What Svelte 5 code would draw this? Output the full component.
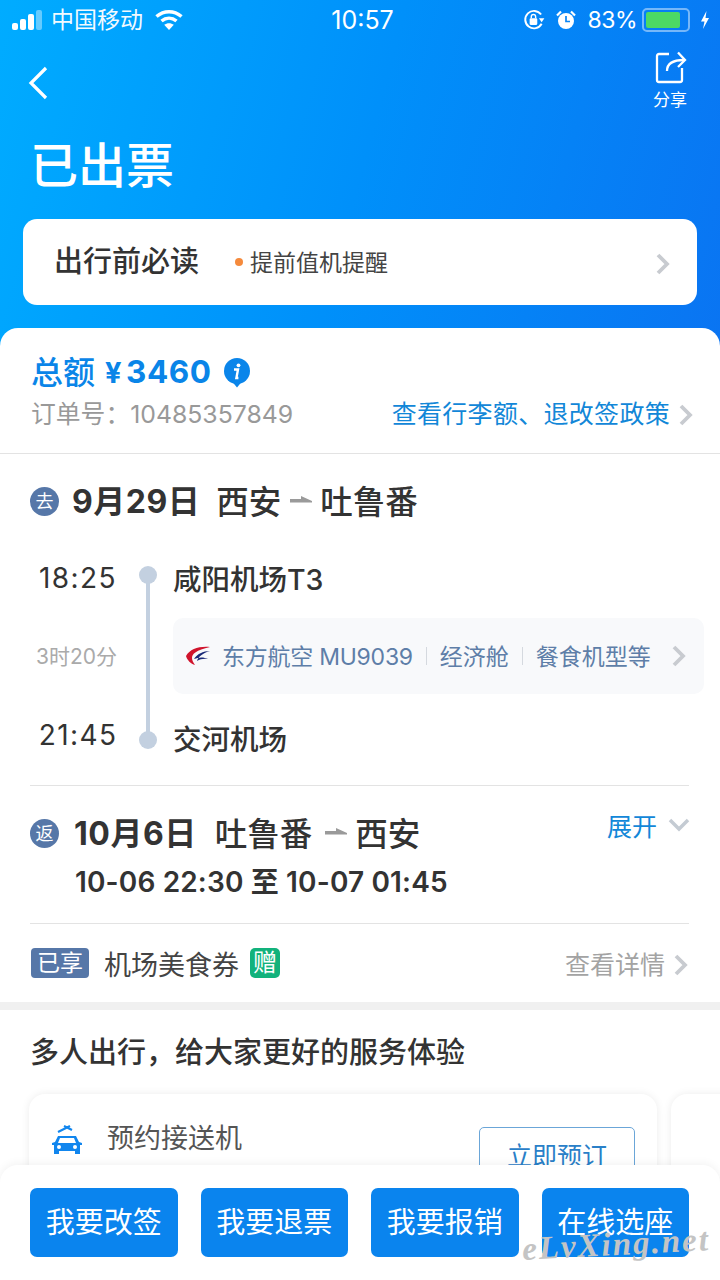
<script>
  const buttons = ['我要改签', '我要退票', '我要报销', '在线选座'];
</script>

<div class="page">
  <header class="hero">
    <div class="status">
      <div class="status-side">
        <svg class="signal" width="34" height="22" viewBox="0 0 34 22">
          <rect x="1" y="14" width="6" height="7" rx="2" fill="#fff"/>
          <rect x="9" y="10" width="6" height="11" rx="2" fill="#fff"/>
          <rect x="17" y="5" width="6" height="16" rx="2" fill="#fff"/>
          <rect x="25" y="1" width="6" height="20" rx="2" fill="#fff" opacity=".4"/>
        </svg>
        <span class="carrier">中国移动</span>
        <svg class="wifi" width="28" height="22" viewBox="0 0 28 22" fill="none" stroke="#fff" stroke-width="3.5">
          <path d="M1.500 7.500C9 1 19 1 26.500 7.500"/>
          <path d="M6.500 12C11 8.300 17 8.300 21.500 12"/>
          <path d="M14 21l-4.800-5.200C12 13.600 16 13.600 18.800 15.800z" fill="#fff" stroke="none"/>
        </svg>
      </div>
      <span class="clock">10:57</span>
      <div class="status-side right">
        <svg width="24" height="24" viewBox="0 0 22 22" fill="none" stroke="#fff" stroke-width="1.800">
          <path d="M18 14.500A8 8 0 1 1 17.500 6"/>
          <path d="M20.500 9.500h-5l2.500 3.500z" fill="#fff" stroke="none"/>
          <rect x="7" y="9.500" width="7" height="6" rx="1" fill="#fff" stroke="none"/>
          <path d="M8.500 9.500V8a2 2 0 0 1 4 0v1.500" stroke-width="1.300"/>
        </svg>
        <svg class="alarm" width="20" height="22" viewBox="0 0 20 22">
          <circle cx="10" cy="12" r="8" fill="#fff"/>
          <path d="M10 7v5.500h4" stroke="#0a85f4" stroke-width="1.700" fill="none"/>
          <path d="M1 6.500L5 2.500M19 6.500L15 2.500" stroke="#fff" stroke-width="2.200"/>
        </svg>
        <span class="pct">83%</span>
        <div class="battery"><i></i></div>
        <svg width="10" height="20" viewBox="0 0 10 20"><path d="M6.500 1L1 11.500h3.500L3 19l6-11H5.500z" fill="#fff"/></svg>
      </div>
    </div>

    <div class="nav">
      <svg class="back" width="24" height="36" viewBox="0 0 24 36" fill="none" stroke="#fff" stroke-width="3.200">
        <path d="M19 3L4 18l15 15"/>
      </svg>
      <div class="share">
        <svg width="34" height="34" viewBox="0 0 34 34" fill="none" stroke="#fff" stroke-width="2.300">
          <path d="M15 4H5a2 2 0 0 0-2 2v24a2 2 0 0 0 2 2h21a2 2 0 0 0 2-2V18"/>
          <path d="M13 21c0-7 5-11 17-11"/>
          <path d="M24 2.500l7 7.500-7 7"/>
        </svg>
        <span>分享</span>
      </div>
    </div>

    <h1>已出票</h1>

    <div class="notice">
      <strong>出行前必读</strong>
      <i class="dot"></i>
      <span>提前值机提醒</span>
      <svg class="chev notice-chev" width="16" height="24" viewBox="0 0 16 24"><path d="M3 3l9 9-9 9"/></svg>
    </div>
  </header>

  <main class="sheet">
    <section class="summary">
      <div class="total">
        <span class="total-label">总额</span>
        <span class="amount"><em>¥</em>3460</span>
        <svg class="info" width="28" height="30" viewBox="0 0 28 30">
          <circle cx="14" cy="13" r="13" fill="#0a85ea"/>
          <path d="M9.500 24l4.500 5.500 4.500-5.500z" fill="#0a85ea"/>
          <path d="M11 11.500h4l-1.600 8.500h2" fill="none" stroke="#fff" stroke-width="2.400"/>
          <circle cx="15.500" cy="7.300" r="1.900" fill="#fff"/>
        </svg>
      </div>
      <div class="order">
        <span class="order-no">订单号：10485357849</span>
        <span class="policy">查看行李额、退改签政策</span>
        <svg class="chev" width="16" height="24" viewBox="0 0 16 24"><path d="M3 3l9 9-9 9"/></svg>
      </div>
    </section>

    <section class="trip">
      <div class="trip-head">
        <span class="badge">去</span>
        <span class="date">9月29日</span>
        <span class="route">西安</span>
        <svg class="arrow" width="22" height="8" viewBox="0 0 22 8"><path d="M0 3h11V0l11 5v1.500H0z" fill="#9a9a9a"/></svg>
        <span class="route">吐鲁番</span>
      </div>

      <div class="timeline">
        <div class="rail"></div>
        <div class="stop first">
          <time>18:25</time>
          <i class="node"></i>
          <b>咸阳机场T3</b>
        </div>
        <div class="flight-row">
          <span class="duration">3时20分</span>
          <div class="flight">
            <svg width="26" height="22" viewBox="0 0 26 22">
              <path d="M25 2C14 1 5 4 1 11c1 4 5 8 9 9-2-3-3-5-3-7 0-4 4-8 18-11z" fill="#d0142c"/>
              <path d="M25 6c-7 0-13 3-16 8 5-2 10-2 14 0-4-.5-8 0-11 2 1-4 6-8 13-10z" fill="#1b2a78"/>
            </svg>
            <span class="carrier-name">东方航空 MU9039</span>
            <i class="sep"></i>
            <span>经济舱</span>
            <i class="sep"></i>
            <span>餐食机型等</span>
            <svg class="chev flight-chev" width="16" height="24" viewBox="0 0 16 24"><path d="M3 3l9 9-9 9"/></svg>
          </div>
        </div>
        <div class="stop last">
          <time>21:45</time>
          <i class="node"></i>
          <b>交河机场</b>
        </div>
      </div>

      <div class="return">
        <div class="return-main">
          <div class="trip-head ret">
            <span class="badge">返</span>
            <span class="date">10月6日</span>
            <span class="route">吐鲁番</span>
            <svg class="arrow" width="22" height="8" viewBox="0 0 22 8"><path d="M0 3h11V0l11 5v1.500H0z" fill="#9a9a9a"/></svg>
            <span class="route">西安</span>
          </div>
          <div class="return-time">10-06 22:30 至 10-07 01:45</div>
        </div>
        <div class="expand">
          <span>展开</span>
          <svg width="24" height="16" viewBox="0 0 24 16" fill="none" stroke="#c4cbd3" stroke-width="3.500"><path d="M3 3l9 9 9-9"/></svg>
        </div>
      </div>

      <div class="perk">
        <span class="enjoyed">已享</span>
        <span class="perk-name">机场美食券</span>
        <span class="gift">赠</span>
        <span class="detail">查看详情</span>
        <svg class="chev" width="16" height="24" viewBox="0 0 16 24"><path d="M3 3l9 9-9 9"/></svg>
      </div>
    </section>

    <section class="group">
      <h2>多人出行，给大家更好的服务体验</h2>
      <div class="cards">
        <div class="card">
          <svg class="car" width="34" height="32" viewBox="0 0 34 32">
            <path d="M8 8l12-6M14 2l8 4" stroke="#1186ee" stroke-width="2.200" fill="none"/>
            <path d="M8 12h18l3 6 3 1v2h-2v9h-5v-3H9v3H4v-9H2v-2l3-1z" fill="#1186ee"/>
            <path d="M10 14h14l2 5H8z" fill="#fff"/>
            <circle cx="9" cy="23" r="2" fill="#fff"/><circle cx="25" cy="23" r="2" fill="#fff"/>
          </svg>
          <span class="card-title">预约接送机</span>
          <span class="book">立即预订</span>
        </div>
        <div class="card next"></div>
      </div>
    </section>
  </main>

  <footer class="actions">
    {#each buttons as label}
      <button>{label}</button>
    {/each}
  </footer>

  <div class="watermark">eLvXing.net</div>
</div>

<style>
  :global(body) {
    margin: 0;
    background: #fff;
  }
  .page {
    position: relative;
    width: 720px;
    height: 1280px;
    overflow: hidden;
    font-family: "Inter", "Noto Sans CJK SC", sans-serif;
    color: #333;
  }
  .hero {
    height: 350px;
    box-sizing: border-box;
    padding: 0 23px;
    background: linear-gradient(105deg, #00acff 0%, #0090fa 50%, #0a74f2 100%);
    color: #fff;
  }
  .status {
    display: grid;
    grid-template-columns: 1fr auto 1fr;
    align-items: center;
    height: 40px;
    margin: 0 -13px 0 -12px;
  }
  .status-side {
    display: flex;
    align-items: center;
  }
  .status-side.right {
    justify-content: flex-end;
    gap: 6px;
  }
  .carrier {
    font-size: 23px;
    margin: 0 12px 0 6px;
    opacity: .95;
    line-height: 40px;
  }
  .clock {
    font-size: 25px;
    line-height: 40px;
    margin-left: 4px;
  }
  .pct {
    font-size: 23px;
    margin-left: 5px;
    letter-spacing: -.5px;
  }
  .alarm {
    margin-left: 4px;
  }
  .battery {
    width: 40px;
    margin-left: -1px;
    padding: 2px;
    box-sizing: content-box;
    border: 2px solid rgba(255,255,255,.45);
    border-radius: 5px;
    height: 16px;
    margin-right: 4px;
  }
  .battery i {
    display: block;
    width: 34px;
    height: 16px;
    background: #4cd964;
    border-radius: 2px;
  }
  .nav {
    display: flex;
    justify-content: space-between;
    align-items: flex-start;
    height: 83px;
    padding: 10px 9px 0 4px;
    box-sizing: border-box;
  }
  .back {
    margin-top: 15px;
  }
  .share {
    display: flex;
    flex-direction: column;
    align-items: center;
  }
  .share span {
    margin-top: 6px;
    font-size: 17px;
    line-height: 20px;
  }
  .share svg {
    margin-left: 2px;
  }
  h1 {
    margin: 0 0 0 7px;
    font-size: 48px;
    line-height: 86px;
    height: 96px;
    font-weight: 500;
  }
  .notice {
    display: flex;
    align-items: center;
    height: 86px;
    padding: 0 26px 0 31px;
    background: #fff;
    border-radius: 14px;
    color: #333;
  }
  .notice strong {
    font-size: 29px;
    font-weight: 500;
    margin-right: 36px;
    line-height: 84px;
  }
  .dot {
    width: 8px;
    height: 8px;
    border-radius: 50%;
    background: #f58a3c;
    margin-right: 7px;
  }
  .notice span {
    font-size: 23px;
    color: #444;
    margin-bottom: 2px;
  }
  .chev {
    flex: none;
    fill: none;
    stroke: #c8cbd0;
    stroke-width: 3.800;
    margin-top: 4px;
  }
  .notice-chev {
    margin-left: auto;
  }
  .sheet {
    position: relative;
    margin-top: -22px;
    background: #fff;
    border-radius: 18px 18px 0 0;
  }
  .summary {
    height: 126px;
    box-sizing: border-box;
    padding: 20px 26px 0 31px;
    border-bottom: 1px solid #e3e3e3;
  }
  .total {
    display: flex;
    align-items: center;
    height: 46px;
    color: #0a85e8;
  }
  .total-label {
    font-size: 32px;
    font-weight: 500;
    margin-top: -2px;
  }
  .amount {
    font-weight: 700;
    font-size: 31.500px;
    margin: 0 12px 0 10px;
    letter-spacing: .5px;
  }
  .amount em {
    font-style: normal;
    font-size: 29px;
    margin-right: 4px;
  }
  .info {
    margin-top: 4px;
  }
  .order {
    display: flex;
    align-items: center;
    height: 38px;
  }
  .order-no {
    color: #999;
    font-size: 24.800px;
    margin-bottom: 2px;
  }
  .policy {
    margin-left: auto;
    margin-right: 8px;
    font-size: 25px;
    letter-spacing: .3px;
    color: #1287d8;
    margin-bottom: 2px;
  }
  .trip {
    padding: 0 31px 0 30px;
  }
  .trip-head {
    display: flex;
    align-items: center;
    height: 94px;
  }
  .badge {
    flex: none;
    width: 29px;
    height: 29px;
    border-radius: 50%;
    background: #5677a8;
    color: #fff;
    font-size: 18px;
    line-height: 29px;
    text-align: center;
    margin-right: 13px;
  }
  .date {
    font-weight: 700;
    font-size: 32px;
    letter-spacing: .5px;
    margin-right: 16px;
    margin-bottom: 4px;
    color: #333;
  }
  .route {
    font-size: 32.500px;
    font-weight: 500;
    color: #333;
    margin-bottom: 4px;
  }
  .arrow {
    margin: 0 8px 2px 9px;
  }
  .timeline {
    position: relative;
    height: 237px;
    border-bottom: 1px solid #e3e3e3;
  }
  .rail {
    position: absolute;
    left: 116px;
    top: 27px;
    bottom: 45px;
    width: 4px;
    background: #c3d0e0;
  }
  .stop {
    display: flex;
    align-items: center;
    height: 58px;
    position: relative;
  }
  time {
    width: 96px;
    text-align: center;
    font-size: 28px;
    letter-spacing: 1.400px;
    color: #333;
    margin-top: 2px;
  }
  .node {
    width: 18px;
    height: 18px;
    border-radius: 50%;
    background: #c3d0e0;
    margin: 0 16px 0 13px;
    flex: none;
  }
  .first .node {
    margin-top: -4px;
  }
  .last .node {
    margin-top: 10px;
  }
  .stop b {
    font-size: 28.500px;
    font-weight: 500;
    color: #333;
  }
  .last b {
    margin-top: 4px;
  }
  .last time {
    margin-top: 0;
  }
  .flight-row {
    display: flex;
    align-items: center;
    height: 100px;
    margin-right: -15px;
    position: relative;
  }
  .duration {
    width: 92px;
    margin: 0 45px 2px 6px;
    font-size: 21px;
    color: #aaa;
    white-space: nowrap;
  }
  .flight {
    flex: 1;
    display: flex;
    align-items: center;
    height: 76px;
    padding: 0 17px 0 12px;
    background: #f8f9fb;
    border-radius: 10px;
    color: #5e7ea8;
    font-size: 23px;
  }
  .flight span {
    margin-bottom: 3px;
  }
  .carrier-name {
    letter-spacing: -.25px;
  }
  .flight svg:first-child {
    margin-right: 11px;
  }
  .sep {
    width: 1px;
    height: 18px;
    background: #d5d9df;
    margin: 0 13px;
  }
  .flight-chev {
    margin-left: auto;
    margin-top: 0;
  }
  .return {
    display: flex;
    justify-content: space-between;
    height: 137px;
    border-bottom: 1px solid #e3e3e3;
  }
  .ret .badge {
    margin-right: 15px;
  }
  .ret .date {
    margin-right: 18px;
  }
  .ret .arrow {
    margin: 0 8px 2px 13px;
  }
  .return-time {
    margin-top: -20px;
    margin-left: 45px;
    font-weight: 600;
    font-size: 28px;
    letter-spacing: .15px;
    color: #333;
    white-space: nowrap;
  }
  .expand {
    display: flex;
    align-items: center;
    height: 40px;
    margin: 19px -2px 0 0;
    color: #1287d8;
    font-size: 25px;
    gap: 10px;
  }
  .perk {
    display: flex;
    align-items: center;
    height: 78px;
    padding-left: 1px;
  }
  .enjoyed {
    width: 58px;
    height: 30px;
    border-radius: 4px;
    background: #5677a8;
    color: #fff;
    font-size: 23px;
    line-height: 30px;
    text-align: center;
    margin-right: 15px;
  }
  .perk-name {
    font-size: 27px;
    color: #444;
    margin-right: 11px;
  }
  .gift {
    width: 30px;
    height: 30px;
    border-radius: 5px;
    background: #12b27c;
    color: #fff;
    font-size: 24px;
    line-height: 30px;
    text-align: center;
  }
  .detail {
    margin-left: auto;
    margin-right: 8px;
    font-size: 25px;
    color: #a3a3a3;
  }
  .group {
    border-top: 8px solid #f0f0f0;
    padding: 19px 0 0 30px;
  }
  h2 {
    margin: 0;
    font-size: 29px;
    font-weight: 500;
    line-height: 48px;
    color: #333;
  }
  .cards {
    display: flex;
    gap: 14px;
    margin-top: 17px;
    margin-left: -1px;
  }
  .card {
    flex: none;
    display: flex;
    align-items: flex-start;
    width: 628px;
    height: 180px;
    box-sizing: border-box;
    padding: 28px 22px 0 21px;
    border-radius: 16px;
    box-shadow: 0 0 8px rgba(0, 0, 0, .08);
  }
  .card.next {
    width: 100px;
  }
  .car {
    margin-top: 2px;
  }
  .card-title {
    margin: 0 0 0 23px;
    font-size: 27px;
    line-height: 34px;
    color: #555;
  }
  .book {
    margin-left: auto;
    width: 156px;
    height: 60px;
    margin-top: 5px;
    box-sizing: border-box;
    border: 1px solid #6ba6d8;
    border-radius: 5px;
    font-size: 25px;
    line-height: 56px;
    text-align: center;
    color: #2a80c8;
  }
  .actions {
    position: absolute;
    left: 0;
    right: 0;
    bottom: 0;
    height: 115px;
    box-sizing: border-box;
    display: flex;
    gap: 23px;
    padding: 23px 31px 0 30px;
    background: #fff;
    border-radius: 18px 18px 0 0;
    box-shadow: 0 -2px 8px rgba(0, 0, 0, .05);
  }
  .actions button {
    width: 147.500px;
    height: 69px;
    border: 0;
    border-radius: 7px;
    background: #0a84ee;
    color: #fff;
    font-family: "Inter", "Noto Sans CJK SC", sans-serif;
    font-size: 29px;
    padding: 0 0 5px;
  }
  .watermark {
    position: absolute;
    right: 10px;
    bottom: 17px;
    font-family: "Liberation Serif", serif;
    font-style: italic;
    font-weight: 700;
    font-size: 33px;
    color: #c4c4c4;
    letter-spacing: 2px;
    transform: rotate(-3deg);
  }
</style>
